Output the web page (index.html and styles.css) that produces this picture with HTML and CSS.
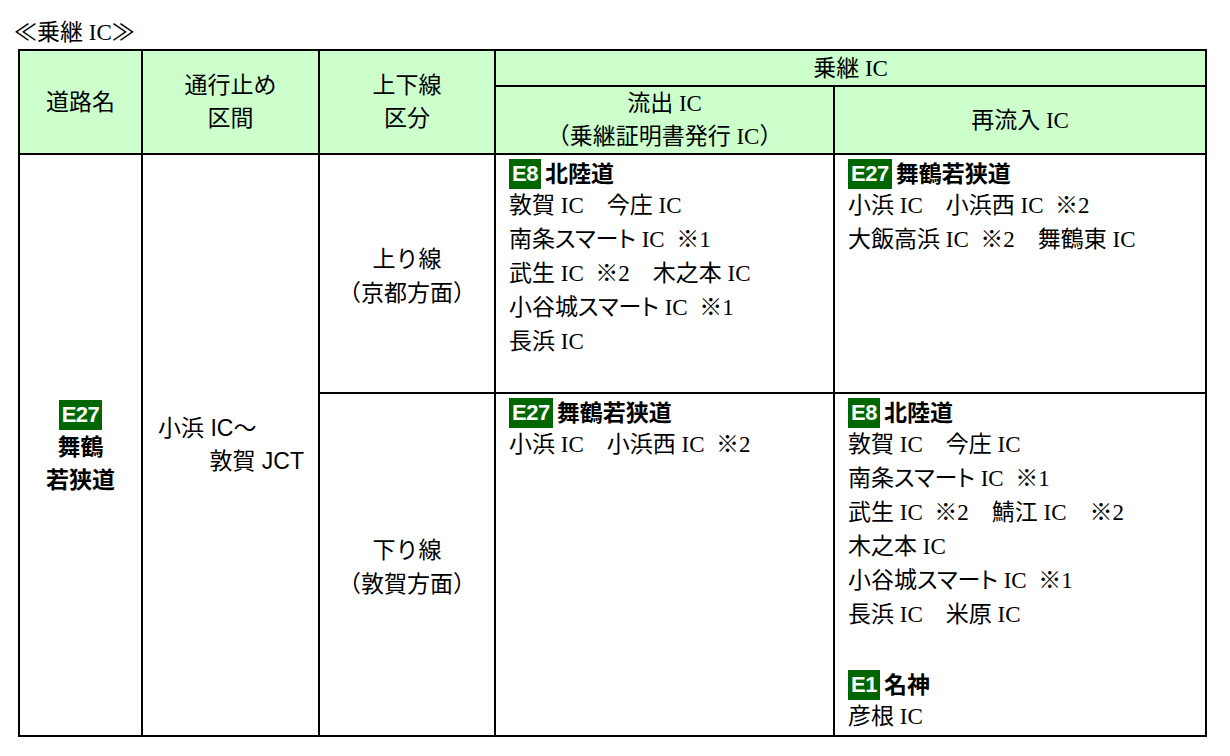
FILE: index.html
```html
<!DOCTYPE html>
<html lang="ja">
<head>
<meta charset="utf-8">
<link rel="stylesheet" href="styles.css">
</head>
<body>
<div class="title">≪乗継 IC≫</div>
<table class="tbl">
  <colgroup>
    <col class="c1"><col class="c2"><col class="c3"><col class="c4"><col class="c5">
  </colgroup>
  <thead>
    <tr class="h1">
      <th rowspan="2">道路名</th>
      <th rowspan="2">通行止め<br>区間</th>
      <th rowspan="2">上下線<br>区分</th>
      <th colspan="2">乗継 IC</th>
    </tr>
    <tr class="h2">
      <th>流出 IC<br>（乗継証明書発行 IC）</th>
      <th>再流入 IC</th>
    </tr>
  </thead>
  <tbody>
    <tr class="r1">
      <td rowspan="2" class="road">
        <div><span class="badge">E27</span></div>
        <div>舞鶴</div>
        <div>若狭道</div>
      </td>
      <td rowspan="2" class="sect">
        <div class="sl">小浜 IC～</div>
        <div class="sr">敦賀 JCT</div>
      </td>
      <td class="dir">上り線<br>（京都方面）</td>
      <td class="list">
        <div class="rn"><span class="badge">E8</span>北陸道</div>
        <div>敦賀 IC　今庄 IC</div>
        <div>南条<span class="kt">スマート</span> IC&nbsp; ※1</div>
        <div>武生 IC&nbsp; ※2　木之本 IC</div>
        <div>小谷城<span class="kt">スマート</span> IC&nbsp; ※1</div>
        <div>長浜 IC</div>
      </td>
      <td class="list">
        <div class="rn"><span class="badge">E27</span>舞鶴若狭道</div>
        <div>小浜 IC　小浜西 IC&nbsp; ※2</div>
        <div>大飯高浜 IC&nbsp; ※2　舞鶴東 IC</div>
      </td>
    </tr>
    <tr class="r2">
      <td class="dir">下り線<br>（敦賀方面）</td>
      <td class="list">
        <div class="rn"><span class="badge">E27</span>舞鶴若狭道</div>
        <div>小浜 IC　小浜西 IC&nbsp; ※2</div>
      </td>
      <td class="list">
        <div class="rn"><span class="badge">E8</span>北陸道</div>
        <div>敦賀 IC　今庄 IC</div>
        <div>南条<span class="kt">スマート</span> IC&nbsp; ※1</div>
        <div>武生 IC&nbsp; ※2　鯖江 IC　※2</div>
        <div>木之本 IC</div>
        <div>小谷城<span class="kt">スマート</span> IC&nbsp; ※1</div>
        <div>長浜 IC　米原 IC</div>
        <div class="blank">&nbsp;</div>
        <div class="rn"><span class="badge">E1</span>名神</div>
        <div>彦根 IC</div>
      </td>
    </tr>
  </tbody>
</table>
</body>
</html>
```
FILE: styles.css
```css
html, body {
  margin: 0;
  padding: 0;
  background: #fff;
}
body {
  font-family: "Liberation Serif", "Noto Sans CJK JP", serif;
  color: #000;
}
.title {
  font-size: 23px;
  line-height: 30px;
  padding: 18px 0 0 14px;
  height: 49px;
  box-sizing: border-box;
}
.tbl {
  margin-left: 18px;
  border-collapse: collapse;
  table-layout: fixed;
  width: 1189px;
  border: 2px solid #000;
  font-size: 23px;
}
.c1 { width: 123px; }
.c2 { width: 177px; }
.c3 { width: 176px; }
.c4 { width: 339px; }
.c5 { width: 372px; }
.tbl th, .tbl td {
  border: 2px solid #000;
  padding: 0;
}
.tbl th {
  background: #ccffcc;
  font-weight: normal;
  line-height: 33px;
  text-align: center;
  vertical-align: middle;
}
.h1 { height: 36px; }
.h2 { height: 68px; }
.r1 { height: 239px; }
.r2 { height: 343px; }
.tbl .road {
  text-align: center;
  vertical-align: middle;
  font-weight: bold;
  line-height: 33px;
  font-family: "Noto Sans CJK JP", sans-serif;
}
.road > div {
  height: 33px;
}
.tbl .sect {
  vertical-align: middle;
  font-family: "Liberation Sans", "Noto Sans CJK JP", sans-serif;
  font-size: 23px;
  line-height: 33px;
  padding: 0 14px 0 15px;
}
.sect > div {
  height: 33px;
}
.sl { text-align: left; }
.sr { text-align: right; }
.tbl .dir {
  text-align: center;
  vertical-align: middle;
  line-height: 34px;
  font-family: "Noto Sans CJK JP", sans-serif;
}
.tbl .list {
  vertical-align: top;
  line-height: 34px;
  padding: 0 0 0 13px;
  white-space: nowrap;
}
.list > div {
  height: 34px;
}
.kt {
  font-feature-settings: "palt";
}
.rn {
  font-family: "Noto Sans CJK JP", sans-serif;
  font-weight: bold;
}
.badge {
  display: inline-block;
  background: #006600;
  color: #fff;
  font-family: "Liberation Sans", sans-serif;
  font-weight: bold;
  font-size: 22px;
  height: 30px;
  line-height: 30px;
  padding: 0 3px;
  margin-right: 4px;
  vertical-align: middle;
  position: relative;
  top: -2px;
  letter-spacing: -0.5px;
}
.road .badge {
  margin-right: 0;
  top: 0;
}
```
